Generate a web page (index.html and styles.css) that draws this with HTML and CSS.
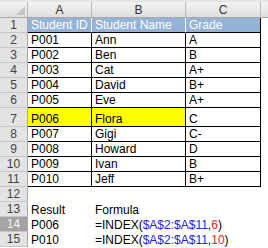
FILE: index.html
```html
<!DOCTYPE html>
<html>
<head>
<meta charset="utf-8">
<link rel="stylesheet" href="styles.css">
</head>
<body>
<div class="strip"></div>
<div class="sheet">
  <div class="ch corner"><span class="tri"></span></div><div class="ch">A</div><div class="ch">B</div><div class="ch">C</div><div class="ch last"></div>

  <div class="rh">1</div><div class="c hd">Student ID</div><div class="c hd">Student Name</div><div class="c hd hdl">Grade</div><div class="c e"></div>
  <div class="rh">2</div><div class="c t">P001</div><div class="c t">Ann</div><div class="c t">A</div><div class="c e"></div>
  <div class="rh">3</div><div class="c t">P002</div><div class="c t">Ben</div><div class="c t">B</div><div class="c e"></div>
  <div class="rh">4</div><div class="c t">P003</div><div class="c t">Cat</div><div class="c t">A+</div><div class="c e"></div>
  <div class="rh">5</div><div class="c t">P004</div><div class="c t">David</div><div class="c t">B+</div><div class="c e"></div>
  <div class="rh">6</div><div class="c t">P005</div><div class="c t">Eve</div><div class="c t">A+</div><div class="c e"></div>
  <div class="rh">7</div><div class="c t y">P006</div><div class="c t y">Flora</div><div class="c t">C</div><div class="c e"></div>
  <div class="rh">8</div><div class="c t">P007</div><div class="c t">Gigi</div><div class="c t">C-</div><div class="c e"></div>
  <div class="rh">9</div><div class="c t">P008</div><div class="c t">Howard</div><div class="c t">D</div><div class="c e"></div>
  <div class="rh">10</div><div class="c t">P009</div><div class="c t">Ivan</div><div class="c t">B</div><div class="c e"></div>
  <div class="rh">11</div><div class="c t">P010</div><div class="c t">Jeff</div><div class="c t">B+</div><div class="c e"></div>
  <div class="rh">12</div><div class="c"></div><div class="c"></div><div class="c"></div><div class="c e"></div>
  <div class="rh">13</div><div class="c">Result</div><div class="c">Formula</div><div class="c"></div><div class="c e"></div>
  <div class="rh sel">14</div><div class="c">P006</div><div class="c f">=INDEX(<span class="ref">$A$2:$A$11</span>,<span class="num">6</span>)</div><div class="c"></div><div class="c e"></div>
  <div class="rh">15</div><div class="c">P010</div><div class="c f">=INDEX(<span class="ref">$A$2:$A$11</span>,<span class="num">10</span>)</div><div class="c"></div><div class="c e"></div>
</div>
</body>
</html>
```
FILE: styles.css
```css
html, body {
  margin: 0;
  padding: 0;
  background: #ffffff;
  overflow: hidden;
}
body {
  font-family: "Liberation Sans", Arial, sans-serif;
  font-size: 12px;
  color: #000;
}
.strip {
  height: 2px;
  background: #e6e6e6;
}
.sheet {
  display: grid;
  grid-template-columns: 28px 64px 94px 75px 7px;
  grid-template-rows: 16px repeat(6, 15px) 19px repeat(8, 15px);
  width: 268px;
}
.sheet > div {
  box-sizing: border-box;
  white-space: nowrap;
  display: flex;
  align-items: flex-end;
  line-height: 14px;
}
.ch {
  background: linear-gradient(#f3f3f3, #dedede);
  border-right: 1px solid #b8b8b8;
  border-bottom: 1px solid #a8a8a8;
  justify-content: center;
  align-items: center !important;
  color: #333;
  font-size: 12px;
}
.ch.last {
  border-right: none;
}
.corner {
  position: relative;
}
.tri {
  position: absolute;
  right: 2px;
  bottom: 2px;
  width: 0;
  height: 0;
  border-left: 9px solid transparent;
  border-bottom: 9px solid #c4c4c4;
}
.rh {
  background: #e3e3e3;
  border-right: 1px solid #a8a8a8;
  border-bottom: 1px solid #c6c6c6;
  justify-content: center;
  color: #444;
  font-size: 12px;
}
.rh.sel {
  background: #a3a3a3;
  color: #f4f4f4;
}
.c {
  padding-left: 3px;
  overflow: visible;
}
.hd {
  background: #95b3d7;
  color: #ffffff;
  border-right: 1px solid #ffffff;
  border-bottom: 1px solid #000;
}
.hdl {
  border-right: 1px solid #000;
}
.t {
  border-right: 1px solid #000;
  border-bottom: 1px solid #000;
}
.y {
  background: #ffff00;
}
.e {
  padding: 0;
}
.f {
  position: relative;
  z-index: 1;
}
.ref {
  color: #2222ee;
}
.num {
  color: #ee2222;
}
```
